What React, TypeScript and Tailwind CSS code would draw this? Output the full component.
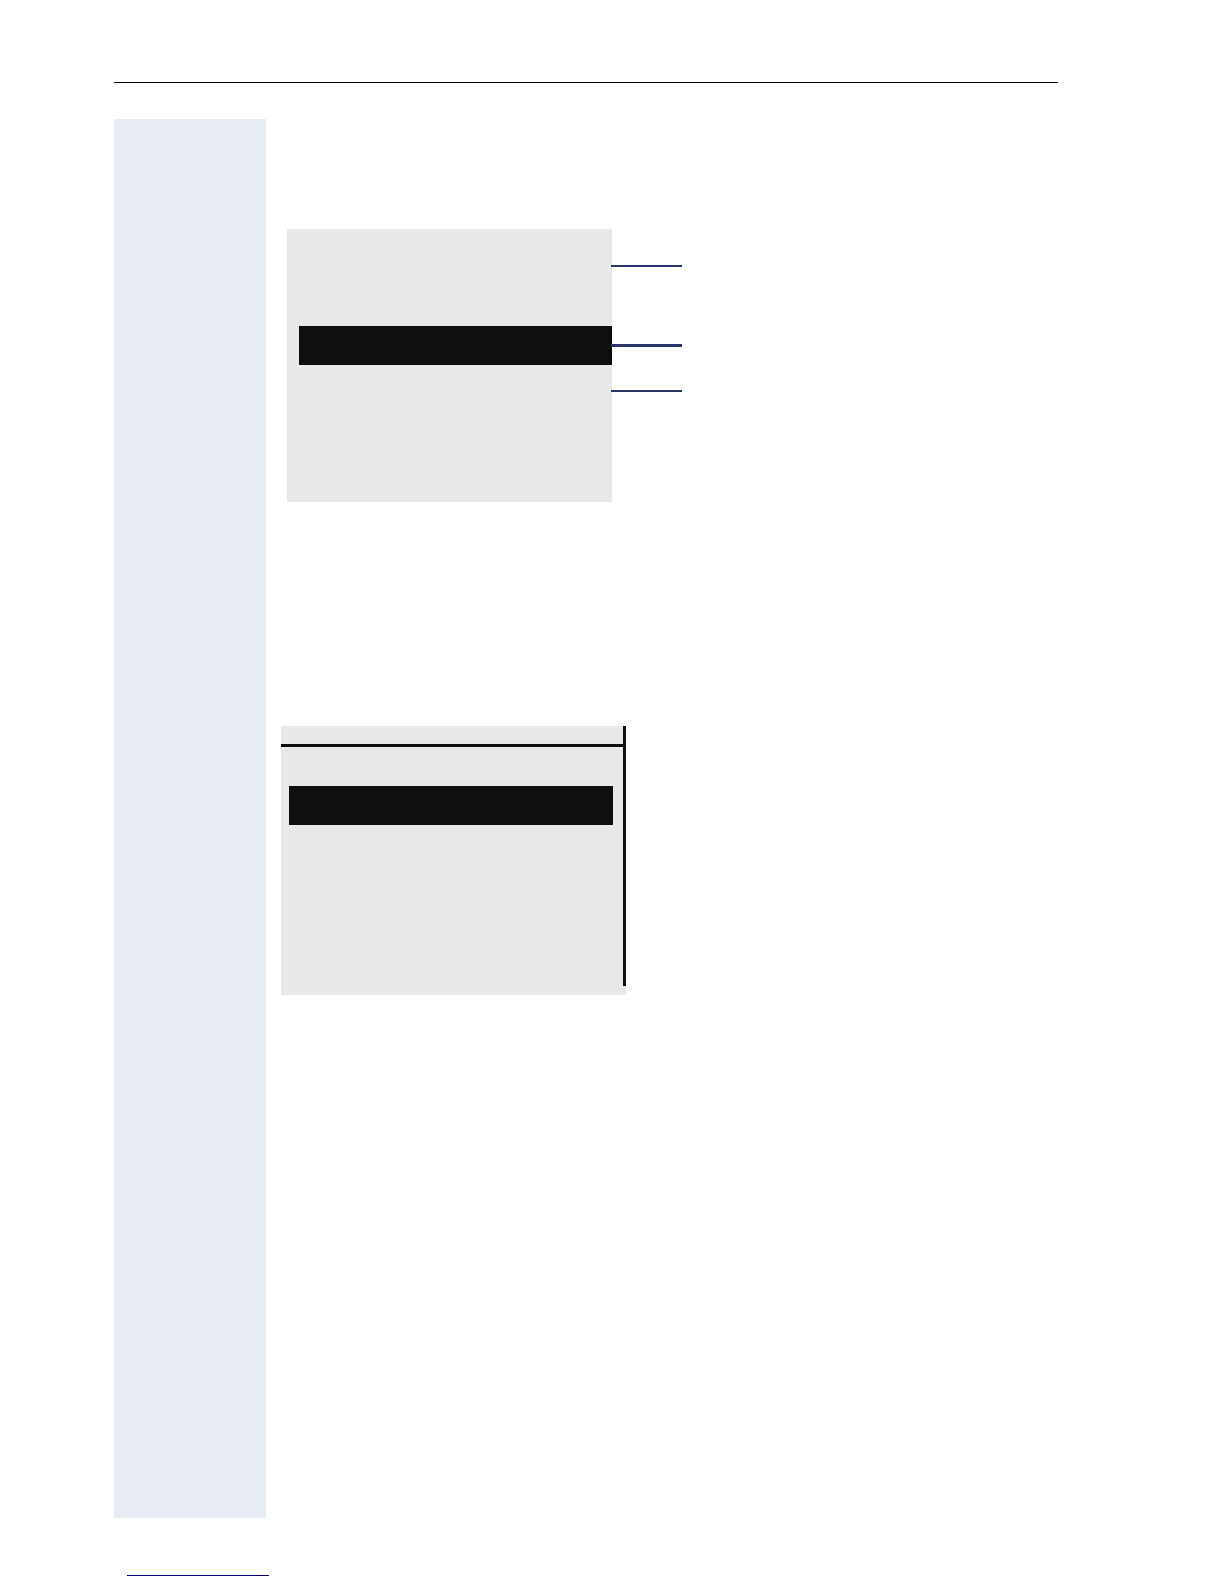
/**
 * Manual page - header rule, tinted margin column and two phone display figures
 */

// Display with callout lines running out of its right edge
function IdleDisplay() {
    return (
        <div className="flex items-start ml-[21px] mt-[110px]">
            <div className="w-[325px] h-[273px] bg-[#e8e8e8] pt-[97px] pl-3">
                <div className="h-[39px] bg-[#100f0d]" />
            </div>

            {/* Callouts */}
            <div className="w-[71px] -ml-px pt-9 flex flex-col">
                <div className="h-0.5 bg-[#2a3569]" />
                <div className="h-[3px] mt-[77px] bg-[#2a3569]" />
                <div className="h-0.5 mt-[43px] bg-[#2a3569]" />
            </div>
        </div>
    );
}

// Display with a title line on top and a scroll bar on the right
function MenuDisplay() {
    return (
        <div className="flex w-[345px] h-[269px] ml-[15px] mt-56 bg-[#e8e8e8]">
            <div className="flex-1">
                <div className="h-[21px] border-b-3 border-[#100f0d]" />
                <div className="h-[39px] mt-[39px] ml-2 mr-2.5 bg-[#100f0d]" />
            </div>
            <div className="w-[3px] h-[260px] bg-[#100f0d]" />
        </div>
    );
}

export default function App() {
    return (
        <div className="min-h-screen flex flex-col bg-white pt-[82px] pb-2 pl-[114px]">
            <header className="h-px mr-[166px] bg-black" />

            <main className="flex flex-1 mt-9">
                <aside className="w-[152px] shrink-0 bg-[#e7ebf4]" />
                <section className="flex-1 min-w-0">
                    <IdleDisplay />
                    <MenuDisplay />
                </section>
            </main>

            <footer className="mt-[57px] ml-[13px]">
                <div className="w-[142px] h-px bg-[#000080]" />
            </footer>
        </div>
    );
}
